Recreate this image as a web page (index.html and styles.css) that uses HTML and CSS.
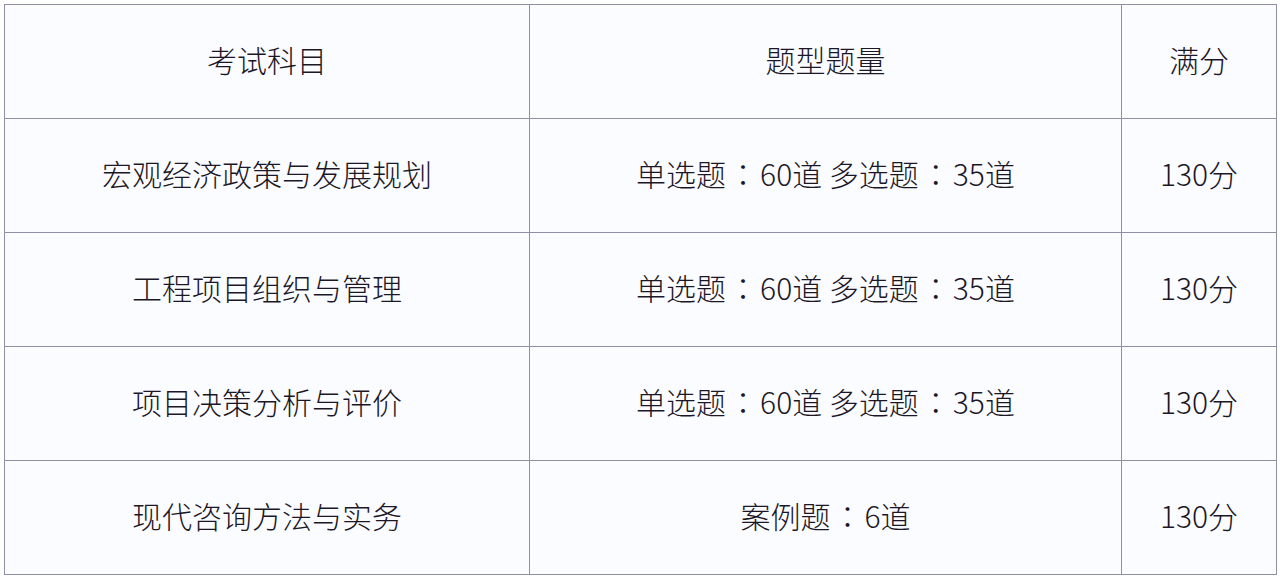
FILE: index.html
```html
<!DOCTYPE html>
<html lang="zh">
<head>
<meta charset="utf-8">
<title>考试科目</title>
<link rel="stylesheet" href="styles.css">
</head>
<body>
<table class="exam">
  <colgroup>
    <col class="c1">
    <col class="c2">
    <col class="c3">
  </colgroup>
  <tr><td>考试科目</td><td>题型题量</td><td>满分</td></tr>
  <tr><td>宏观经济政策与发展规划</td><td>单选题<span class="colon" lang="zh-Hant-TW">：</span>60道 多选题<span class="colon" lang="zh-Hant-TW">：</span>35道</td><td>130分</td></tr>
  <tr><td>工程项目组织与管理</td><td>单选题<span class="colon" lang="zh-Hant-TW">：</span>60道 多选题<span class="colon" lang="zh-Hant-TW">：</span>35道</td><td>130分</td></tr>
  <tr><td>项目决策分析与评价</td><td>单选题<span class="colon" lang="zh-Hant-TW">：</span>60道 多选题<span class="colon" lang="zh-Hant-TW">：</span>35道</td><td>130分</td></tr>
  <tr><td>现代咨询方法与实务</td><td>案例题<span class="colon" lang="zh-Hant-TW">：</span>6道</td><td>130分</td></tr>
</table>
</body>
</html>
```
FILE: styles.css
```css
html, body {
  margin: 0;
  padding: 0;
  background: #ffffff;
}
body {
  padding: 4px 0 0 4px;
  font-family: "Noto Sans CJK SC", "Noto Sans", sans-serif;
}
.exam {
  border-collapse: collapse;
  table-layout: fixed;
  width: 1272px;
  background: #fbfcff;
  color: #1b1726;
  font-size: 30px;
  font-weight: 300;
}
.c1 { width: 525px; }
.c2 { width: 592px; }
.c3 { width: 155px; }
.exam td {
  height: 107px;
  padding: 0 0 6px 0;
  border: 1px solid #938ea8;
  text-align: center;
  vertical-align: middle;
  white-space: nowrap;
}
.colon {
  font-family: "Noto Sans CJK TC", "Noto Sans CJK SC", sans-serif;
  margin: 0 2px;
}
```
